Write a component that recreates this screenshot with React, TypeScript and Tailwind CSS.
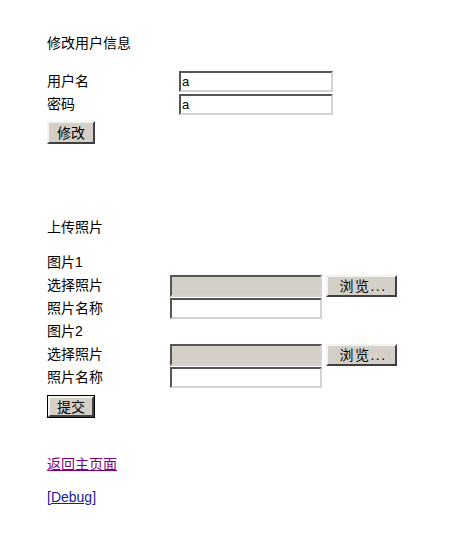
const font = "font-['Liberation_Sans','Noto_Sans_CJK_SC',sans-serif]"

const insetBorder =
  'border-2 border-t-[#555] border-l-[#555] border-r-[#d6d3ce] border-b-[#d6d3ce]'
const outset =
  'border-2 border-t-[#f4f3ef] border-l-[#f4f3ef] border-r-[#404040] border-b-[#404040] bg-[#d4d0c8]'

function PhotoBlock({ n }: { n: number }) {
  return (
    <>
      <div className="h-[23px] leading-[23px]">图片{n}</div>
      <div className="flex h-[23px] items-center">
        <span className="w-[123px]">选择照片</span>
        <div className={`h-[22px] w-[152px] bg-[#d4d0c8] ${insetBorder}`} />
        <button
          className={`ml-[4px] h-[22px] w-[71px] pl-[3px] text-[14px] leading-none tracking-[1.5px] ${outset}`}
        >
          浏览...
        </button>
      </div>
      <div className="flex h-[23px] items-center">
        <span className="w-[123px]">照片名称</span>
        <input className={`h-[21px] w-[152px] bg-white ${insetBorder} outline-none`} />
      </div>
    </>
  )
}

export default function App() {
  return (
    <div className={`min-h-[541px] bg-white pl-[47px] pt-[33px] text-[14px] text-black ${font}`}>
      {/* 修改用户信息 */}
      <div className="h-[20px] leading-[20px]">修改用户信息</div>
      <div className="mt-[17px]">
        <div className="flex h-[23px] items-center">
          <span className="w-[132px]">用户名</span>
          <input
            defaultValue="a"
            className={`h-[21px] w-[154px] bg-white px-[1px] text-[13px] ${insetBorder} outline-none`}
          />
        </div>
        <div className="flex h-[23px] items-center">
          <span className="w-[132px]">密码</span>
          <input
            defaultValue="a"
            className={`h-[21px] w-[154px] bg-white px-[1px] text-[13px] ${insetBorder} outline-none`}
          />
        </div>
      </div>
      <button className={`mt-[5px] block h-[23px] w-[48px] text-[14px] leading-none ${outset}`}>
        修改
      </button>

      {/* 上传照片 */}
      <div className="mt-[73px] h-[20px] leading-[20px]">上传照片</div>
      <div className="mt-[14px]">
        <PhotoBlock n={1} />
        <PhotoBlock n={2} />
      </div>
      <div className="mt-[6px] h-[23px] w-[48px] border border-black">
        <button className={`block h-full w-full text-[14px] leading-none ${outset}`}>提交</button>
      </div>

      <div className="mt-[36px] h-[20px] leading-[20px]">
        <a href="#" className="text-[#800080] underline">
          返回主页面
        </a>
      </div>
      <div className="mt-[13px] h-[20px] leading-[20px]">
        <a href="#" className="text-[#1a1a99] underline">
          [Debug]
        </a>
      </div>
    </div>
  )
}
